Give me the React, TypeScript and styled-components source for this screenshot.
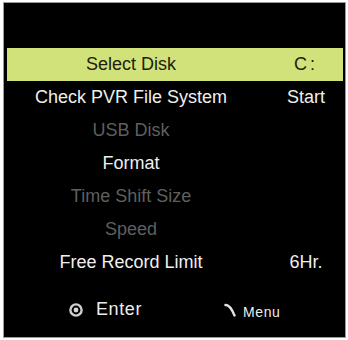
import React from "react";
import styled, { createGlobalStyle } from "styled-components";

const GlobalStyle = createGlobalStyle`
  html, body {
    margin: 0;
    padding: 0;
    background: #ffffff;
  }
  body {
    font-family: "Liberation Sans", Arial, sans-serif;
  }
`;

const Page = styled.div`
  width: 348px;
  height: 340px;
  padding: 3px 3px 3px 4px;
  box-sizing: border-box;
  background: #ffffff;
`;

const Screen = styled.div`
  width: 341px;
  height: 334px;
  box-sizing: border-box;
  padding: 45px 2px 0 3px;
  background: #000000;
  box-shadow: 0 0 0 1px #9a9a9a;
  display: flex;
  flex-direction: column;
`;

const Menu = styled.div`
  display: flex;
  flex-direction: column;
`;

const Row = styled.div<{ $selected?: boolean; $disabled?: boolean }>`
  display: grid;
  grid-template-columns: 248px 1fr;
  column-gap: 14px;
  height: 33px;
  align-items: center;
  font-size: 18px;
  line-height: 33px;
  background: ${(p) => (p.$selected ? "#d1e27b" : "transparent")};
  color: ${(p) =>
    p.$selected ? "#1c210d" : p.$disabled ? "#5f5f5f" : "#efefef"};
`;

const Label = styled.span`
  text-align: center;
  white-space: nowrap;
`;

const Value = styled.span<{ $wide?: boolean }>`
  text-align: center;
  white-space: nowrap;
  letter-spacing: ${(p) => (p.$wide ? "3px" : "0")};
`;

const Footer = styled.div`
  flex: 1;
  display: flex;
  align-items: center;
  padding-left: 62px;
  padding-top: 3px;
`;

const Hint = styled.div<{ $gap: number }>`
  display: flex;
  align-items: center;
  gap: ${(p) => p.$gap}px;
  color: #ececec;
`;

const EnterText = styled.span`
  font-size: 18px;
  letter-spacing: 0.6px;
`;

const MenuText = styled.span`
  font-size: 14px;
  letter-spacing: 0.6px;
  margin-top: 4px;
`;

const Spacer = styled.div`
  width: 82px;
`;

const EnterIcon = () => (
  <svg width="14" height="14" viewBox="0 0 14 14">
    <circle cx="7" cy="7" r="5.6" fill="none" stroke="#cfcfcf" strokeWidth="2.4" />
    <circle cx="7" cy="7" r="2.4" fill="#d8d8d8" />
  </svg>
);

const BackIcon = () => (
  <svg width="12" height="14" viewBox="0 0 12 14">
    <path
      d="M1.5 2 Q6 1.5 10.5 12.5"
      fill="none"
      stroke="#e4e4e4"
      strokeWidth="2.4"
      strokeLinecap="round"
    />
  </svg>
);

const items = [
  { label: "Select Disk", value: "C:", selected: true },
  { label: "Check PVR File System", value: "Start" },
  { label: "USB Disk", disabled: true },
  { label: "Format" },
  { label: "Time Shift Size", disabled: true },
  { label: "Speed", disabled: true },
  { label: "Free Record Limit", value: "6Hr." },
];

export default function App() {
  return (
    <>
      <GlobalStyle />
      <Page>
        <Screen>
          <Menu>
            {items.map((it) => (
              <Row key={it.label} $selected={it.selected} $disabled={it.disabled}>
                <Label>{it.label}</Label>
                <Value $wide={it.selected}>{it.value ?? ""}</Value>
              </Row>
            ))}
          </Menu>
          <Footer>
            <Hint $gap={13}>
              <EnterIcon />
              <EnterText>Enter</EnterText>
            </Hint>
            <Spacer />
            <Hint $gap={7}>
              <BackIcon />
              <MenuText>Menu</MenuText>
            </Hint>
          </Footer>
        </Screen>
      </Page>
    </>
  );
}
